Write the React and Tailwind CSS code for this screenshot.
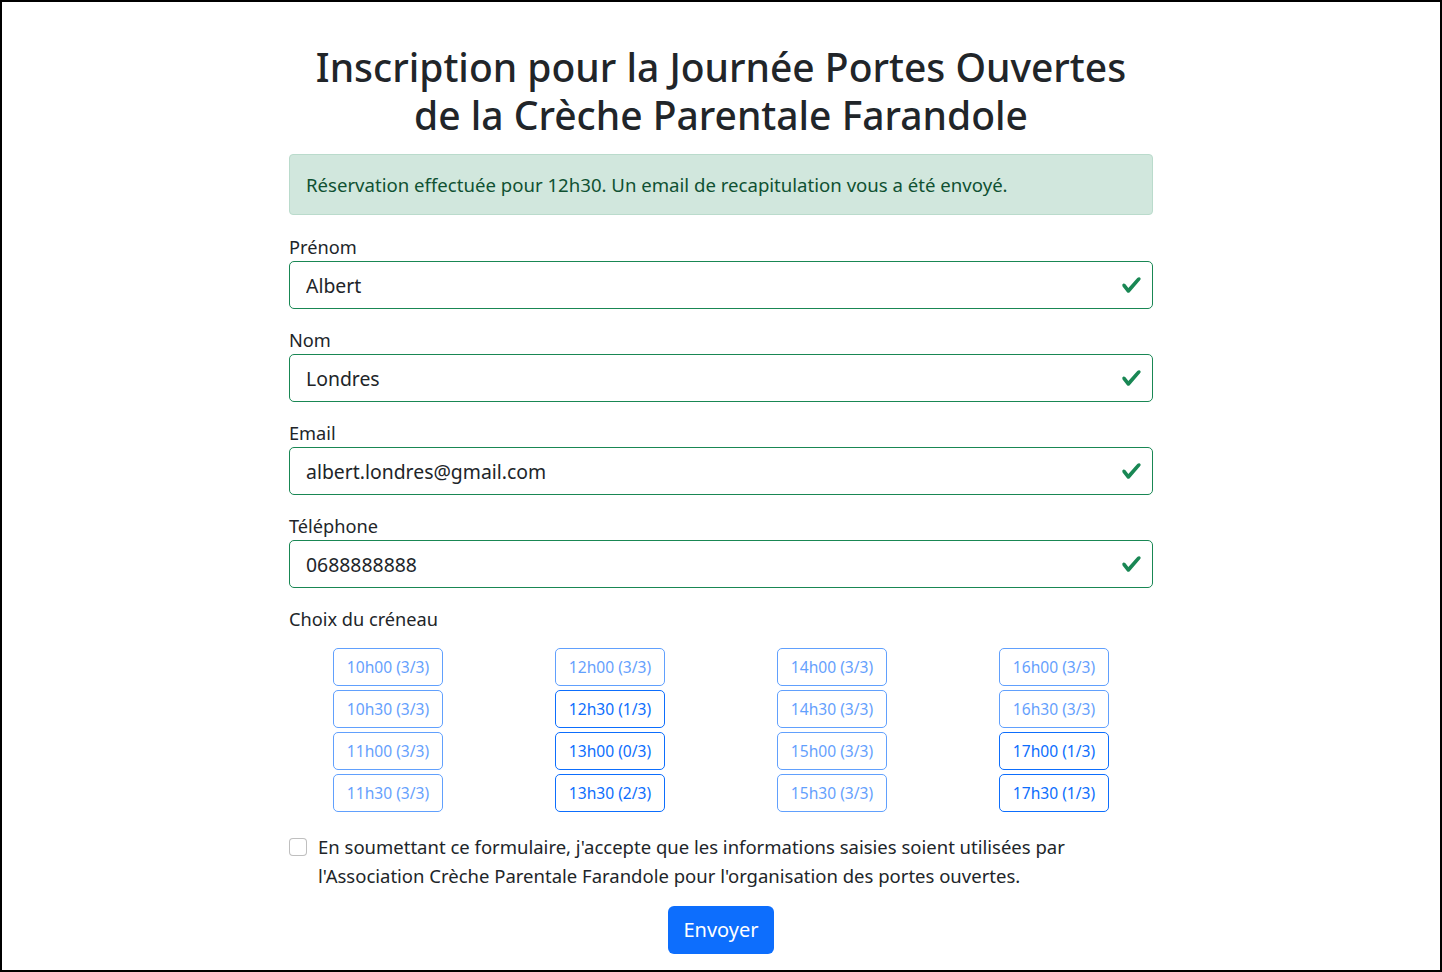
import { useState } from 'react';

const fields = [
  { id: 'prenom', label: 'Prénom', value: 'Albert' },
  { id: 'nom', label: 'Nom', value: 'Londres' },
  { id: 'email', label: 'Email', value: 'albert.londres@gmail.com' },
  { id: 'tel', label: 'Téléphone', value: '0688888888' },
];

const columns = [
  [['10h00', 3], ['10h30', 3], ['11h00', 3], ['11h30', 3]],
  [['12h00', 3], ['12h30', 1], ['13h00', 0], ['13h30', 2]],
  [['14h00', 3], ['14h30', 3], ['15h00', 3], ['15h30', 3]],
  [['16h00', 3], ['16h30', 3], ['17h00', 1], ['17h30', 1]],
];

function ValidIcon() {
  return (
    <svg viewBox="0 0 8 8" className="absolute right-[11px] top-1/2 -translate-y-1/2 w-[21px] h-[21px]">
      <path
        fill="#198754"
        d="M2.3 6.73.6 4.53c-.4-1.04.46-1.4 1.1-.8l1.1 1.4 3.4-3.8c.6-.63 1.6-.27 1.2.7l-4 4.6c-.43.5-.8.4-1.1.1z"
      />
    </svg>
  );
}

export default function App() {
  const [values, setValues] = useState(Object.fromEntries(fields.map((f) => [f.id, f.value])));
  const [agree, setAgree] = useState(false);

  return (
    <div className="h-[972px] border-2 border-black bg-white font-['Noto_Sans',sans-serif] text-[#212529]">
      <div className="mx-auto w-[864px] pt-[41px]">
        <h1 className="text-center text-[39px] leading-[48px] font-medium">
          Inscription pour la Journée Portes Ouvertes
          <br />
          de la Crèche Parentale Farandole
        </h1>

        {/* Alert */}
        <div className="mt-[15px] rounded-[4px] border border-[#badbcc] bg-[#d1e7dd] px-4 py-4 text-[18.6px] leading-[27px] text-[#0f5132]">
          Réservation effectuée pour 12h30. Un email de recapitulation vous a été envoyé.
        </div>

        <form onSubmit={(e) => e.preventDefault()} className="mt-[18px]">
          {fields.map((f) => (
            <div key={f.id} className="mb-[17px]">
              <label htmlFor={f.id} className="block text-[18.2px] leading-[28px]">
                {f.label}
              </label>
              <div className="relative">
                <input
                  id={f.id}
                  value={values[f.id]}
                  onChange={(e) => setValues({ ...values, [f.id]: e.target.value })}
                  className="block h-[48px] w-full rounded-[5px] border border-[#198754] bg-white pl-4 pr-12 text-[19.4px] leading-[30px] text-[#212529] outline-none"
                />
                <ValidIcon />
              </div>
            </div>
          ))}

          <div className="text-[18.2px] leading-[28px]">Choix du créneau</div>

          {/* Slots */}
          <div className="mt-[15px] grid grid-cols-4 gap-x-6">
            {columns.map((col, i) => (
              <div key={i} className="flex flex-col items-center gap-1">
                {col.map(([time, n]) => {
                  const full = n === 3;
                  return (
                    <button
                      key={time}
                      type="button"
                      disabled={full}
                      className={`h-[38px] w-[110px] rounded-[5px] border border-[#0d6efd] text-[15.6px] leading-[24px] text-[#0d6efd] ${full ? 'opacity-65' : 'hover:bg-[#0d6efd] hover:text-white'}`}
                    >
                      {time} ({n}/3)
                    </button>
                  );
                })}
              </div>
            ))}
          </div>

          {/* Consent */}
          <div className="mt-[20px] flex">
            <input
              type="checkbox"
              checked={agree}
              onChange={(e) => setAgree(e.target.checked)}
              className="mt-[6px] h-[18px] w-[18px] shrink-0 appearance-none rounded-[4px] border border-black/25 bg-white checked:bg-[#0d6efd]"
            />
            <p className="ml-[11px] text-[18.5px] leading-[29px]">
              En soumettant ce formulaire, j'accepte que les informations saisies soient utilisées par
              <br />
              l'Association Crèche Parentale Farandole pour l'organisation des portes ouvertes.
            </p>
          </div>

          <button
            type="submit"
            className="mx-auto mt-[16px] block h-[48px] w-[106px] rounded-[6px] bg-[#0d6efd] text-[20px] leading-[30px] text-white"
          >
            Envoyer
          </button>
        </form>
      </div>
    </div>
  );
}
